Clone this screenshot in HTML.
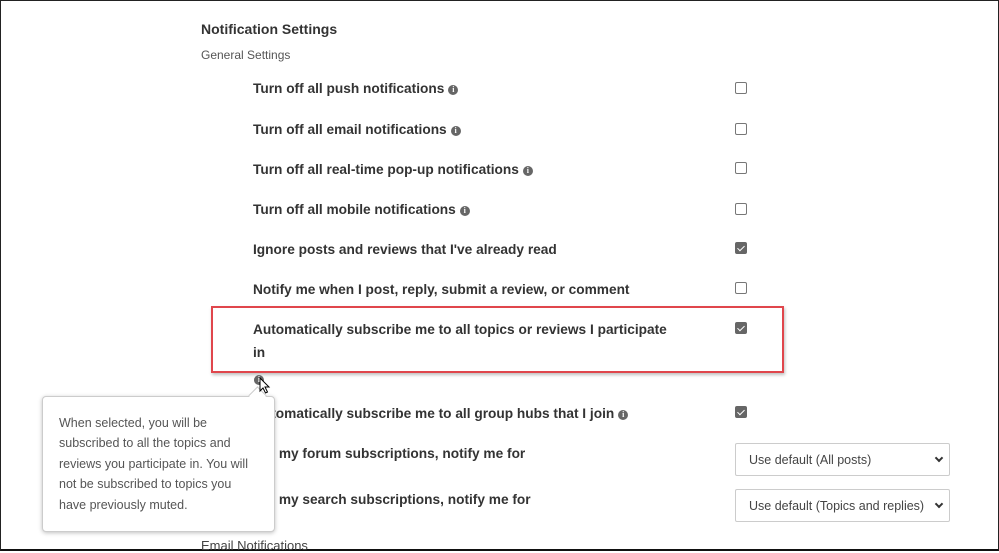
<html><head><style>
body{margin:0;width:999px;height:551px;overflow:hidden;background:#fff;font-family:"Liberation Sans",sans-serif;position:relative}
.frame{position:absolute;left:0;top:0;width:997px;height:548px;border:1px solid #222;border-bottom:2px solid #111}
.t{position:absolute;white-space:nowrap;color:#333}
.b{font-weight:bold;font-size:13.7px;left:253px}
.i{display:inline-block;width:10px;height:10px;border-radius:50%;background:#666;color:#fff;font-size:8px;text-align:center;line-height:10px;font-weight:bold;vertical-align:1px;margin-left:4px;font-family:"Liberation Serif",serif}
.cb{position:absolute;left:735px;width:10px;height:10px;border:1px solid #777;border-radius:2px;background:#fff}
.cb.on{background:#666;border-color:#666}
.cb.on:after{content:"";position:absolute;left:3px;top:1px;width:3px;height:6px;border:solid #fff;border-width:0 1.5px 1.5px 0;transform:rotate(45deg)}
.sel{position:absolute;left:735px;width:215px;height:33px;border:1px solid #ccc;border-radius:2px;font-size:12.5px;color:#444;line-height:32px;box-sizing:border-box;padding-left:13px}
.sel:after{content:"";position:absolute;right:7px;top:11px;width:4px;height:4px;border:solid #333;border-width:0 2px 2px 0;transform:rotate(45deg)}
</style></head><body>
<div class="frame"></div>
<div class="t" style="left:201px;top:21px;font-size:14px;font-weight:bold">Notification Settings</div>
<div class="t" style="left:201px;top:48px;font-size:12px;color:#555">General Settings</div>
<div class="t b" style="top:81px">Turn off all push notifications<span class="i">i</span></div><div class="cb" style="top:82px"></div>
<div class="t b" style="top:122px">Turn off all email notifications<span class="i">i</span></div><div class="cb" style="top:123px"></div>
<div class="t b" style="top:162px">Turn off all real-time pop-up notifications<span class="i">i</span></div><div class="cb" style="top:162px"></div>
<div class="t b" style="top:202px">Turn off all mobile notifications<span class="i">i</span></div><div class="cb" style="top:203px"></div>
<div class="t b" style="top:242px">Ignore posts and reviews that I've already read</div><div class="cb on" style="top:242px"></div>
<div class="t b" style="top:282px">Notify me when I post, reply, submit a review, or comment</div><div class="cb" style="top:282px"></div>
<div class="t b" style="top:322px">Automatically subscribe me to all topics or reviews I participate</div>
<div class="t b" style="top:345px">in</div><div class="cb on" style="top:322px"></div>
<div style="position:absolute;left:211px;top:306px;width:569px;height:63px;border:2px solid #e0464c;box-shadow:1px 2px 3px rgba(0,0,0,.25)"></div>
<div style="position:absolute;left:254px;top:375px"><span class="i" style="margin:0">i</span></div>
<div class="t b" style="top:406px">Automatically subscribe me to all group hubs that I join<span class="i">i</span></div><div class="cb on" style="top:406px"></div>
<div class="t b" style="top:446px">For my forum subscriptions, notify me for</div>
<div class="sel" style="top:443px">Use default (All posts)</div>
<div class="t b" style="top:492px">For my search subscriptions, notify me for</div>
<div class="sel" style="top:489px">Use default (Topics and replies)</div>
<div class="t" style="left:201px;top:538px;font-size:13px;color:#444">Email Notifications</div>
<div style="position:absolute;left:42px;top:396px;width:231px;height:134px;background:#fff;border:1px solid #ccc;border-radius:4px;box-shadow:0 1px 4px rgba(0,0,0,.25)"></div>
<div style="position:absolute;left:251px;top:389px;width:12px;height:12px;background:#fff;border-left:1px solid #ccc;border-top:1px solid #ccc;transform:rotate(45deg)"></div>
<div class="t" style="left:59px;top:413px;font-size:12.5px;line-height:20.4px;color:#555;white-space:normal;width:192px">When selected, you will be subscribed to all the topics and reviews you participate in. You will not be subscribed to topics you have previously muted.</div>
<svg style="position:absolute;left:259px;top:377px" width="12" height="17" viewBox="0 0 12 17"><path d="M1 1 L1 14 L4 11 L6.5 16 L8.5 15 L6 10 L10 10 Z" fill="#fff" stroke="#000" stroke-width="1"/></svg>
</body></html>
